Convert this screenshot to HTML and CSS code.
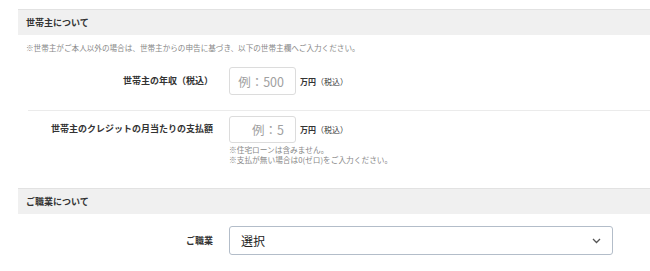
FILE: index.html
```html
<!DOCTYPE html>
<html lang="ja">
<head>
    <meta charset="UTF-8">
    <meta name="viewport" content="width=device-width, initial-scale=1.0">
    <title>お客様情報</title>
    <link rel="stylesheet" href="styles.css">
</head>
<body>

<div class="form">
    <h3 class="section-head">世帯主について</h3>
    <p class="lead">※世帯主がご本人以外の場合は、世帯主からの申告に基づき、以下の世帯主欄へご入力ください。</p>

    <div class="row row-income">
        <label class="row-label" for="income">世帯主の年収（税込）</label>
        <div class="row-field">
            <div class="field-line">
                <input type="text" id="income" class="num-input" placeholder="例：500">
                <span class="unit">万円<span class="unit-tax">（税込）</span></span>
            </div>
        </div>
    </div>

    <div class="row row-credit">
        <label class="row-label" for="credit">世帯主のクレジットの月当たりの支払額</label>
        <div class="row-field">
            <div class="field-line">
                <input type="text" id="credit" class="num-input" placeholder="例：5">
                <span class="unit">万円<span class="unit-tax">（税込）</span></span>
            </div>
            <p class="hint">※住宅ローンは含みません。<br>※支払が無い場合は0(ゼロ)をご入力ください。</p>
        </div>
    </div>

    <h3 class="section-head section-job">ご職業について</h3>

    <div class="row row-job">
        <label class="row-label" for="job">ご職業</label>
        <div class="row-field">
            <div class="select">
                <span class="select-text">選択</span>
                <svg class="chevron" width="9" height="6" viewBox="0 0 9 6">
                    <polyline points="1,1 4.5,4.5 8,1" fill="none" stroke="#555" stroke-width="1.3"/>
                </svg>
            </div>
        </div>
    </div>
</div>

</body>
</html>
```

FILE: styles.css
```css
body {
    margin: 0;
    padding: 9px 0 0 18px;
    font-family: "Noto Sans CJK JP", "Noto Sans", sans-serif;
    color: #333;
    background: #fff;
}

.section-head {
    margin: 0;
    height: 25px;
    line-height: 25px;
    padding-left: 8px;
    border-top: 1px solid #e2e2e2;
    background-color: #f0f0f0;
    background-image: radial-gradient(#e6e6e6 0.5px, transparent 0.7px);
    background-size: 4px 4px;
    font-size: 9px;
    font-weight: bold;
    color: #333;
}

.lead {
    margin: 8px 0 0 8px;
    font-size: 7.6px;
    line-height: 10px;
    color: #888;
}

.row {
    display: flex;
    align-items: flex-start;
}

.row-label {
    width: 229px;
    flex-shrink: 0;
    margin-left: -18px;
    padding-right: 16px;
    box-sizing: border-box;
    text-align: right;
    font-size: 9px;
    font-weight: bold;
    color: #333;
}

.row-income {
    margin-top: 14px;
    margin-left: 10px;
    padding-bottom: 15px;
    border-bottom: 1px solid #ebebeb;
}

.row-income .row-label {
    margin-left: -28px;
    line-height: 28px;
}

.row-credit {
    margin-top: 5px;
}

.row-credit .row-label {
    line-height: 25px;
}

.field-line {
    display: flex;
    align-items: center;
}

.num-input {
    width: 67px;
    height: 28px;
    box-sizing: border-box;
    padding: 0 11px 0 4px;
    border: 1px solid #dcdcdc;
    border-radius: 3px;
    text-align: right;
    font-family: inherit;
    font-size: 12.5px;
    color: #333;
}

.num-input::placeholder {
    color: #a0a0a0;
}

.row-credit .num-input {
    height: 27px;
}

.unit {
    margin-left: 4px;
    font-size: 8px;
    font-weight: bold;
    color: #333;
}

.unit-tax {
    font-weight: normal;
}

.hint {
    margin: 2px 0 0;
    font-size: 7.7px;
    line-height: 10px;
    color: #888;
}

.section-job {
    margin-top: 23px;
}

.row-job {
    margin-top: 12px;
}

.row-job .row-label {
    line-height: 29px;
}

.select {
    width: 384px;
    height: 29px;
    box-sizing: border-box;
    display: flex;
    align-items: center;
    justify-content: space-between;
    padding: 0 11px 0 11px;
    border: 1px solid #b3bdc9;
    border-radius: 3px;
    background: #fff;
}

.select-text {
    font-size: 12px;
    color: #222;
}
```
